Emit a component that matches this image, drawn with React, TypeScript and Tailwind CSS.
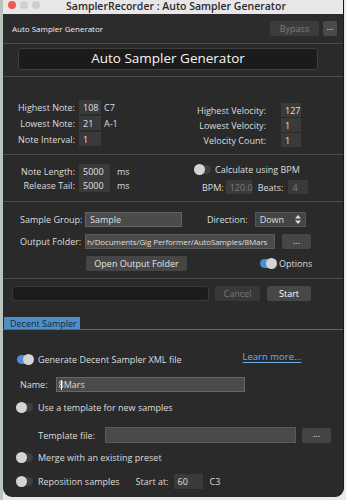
import React from "react";

function Toggle({ on = false }: { on?: boolean }) {
	return (
		<span
			className={`relative inline-block w-[16px] h-[9px] rounded-full shrink-0 ${on ? "bg-[#4a8fd2]" : "bg-[#3e3e3e]"}`}
		>
			<span
				className={`absolute top-[-1px] w-[11px] h-[11px] rounded-full bg-[#d4d4d4] ${on ? "right-[-1px]" : "left-[-1px]"}`}
			/>
		</span>
	);
}

function Box({
	children,
	className = "",
	dim = false,
}: {
	children?: React.ReactNode;
	className?: string;
	dim?: boolean;
}) {
	return (
		<span
			className={`inline-flex items-center h-[14px] px-[4px] bg-[#3a3a3a] ${dim ? "text-[#7a7a7a]" : "text-[#e0e0e0]"} ${className}`}
		>
			{children}
		</span>
	);
}

function Btn({ children, className = "" }: { children?: React.ReactNode; className?: string }) {
	return (
		<span className={`inline-flex items-center justify-center h-[15px] rounded-[2px] ${className}`}>
			{children}
		</span>
	);
}

const Sep = () => <div className="h-px bg-[#4a4a4a]" />;

export default function App() {
	return (
		<div className="w-[346px] h-[500px] bg-[#e9e9e9] flex font-['Open_Sans',sans-serif] font-medium text-[9px] text-[#dedede] leading-none overflow-hidden">
			<div className="w-[3px] bg-[#b9c4bd]" />
			<div className="w-[341px] h-[497px] flex flex-col bg-[#2a2a2a] rounded-b-[9px] overflow-hidden border-r border-[#1a1a1a]">
				{/* window title bar */}
				<div className="relative h-[14px] bg-[#e8e6e8] flex items-center justify-center">
					<div className="absolute left-[5px] top-[1px] flex gap-[4px]">
						<span className="w-[8px] h-[8px] rounded-full bg-[#ee5a52]" />
						<span className="w-[8px] h-[8px] rounded-full bg-[#cfcfcf]" />
						<span className="w-[8px] h-[8px] rounded-full bg-[#cfcfcf]" />
					</div>
					<span className="text-[10.5px] font-semibold text-[#2a2a2a] ml-[6px] -mt-[2px]">
						SamplerRecorder : Auto Sampler Generator
					</span>
				</div>

				{/* plugin header */}
				<div className="h-[29px] flex items-center justify-between pl-[9px] pr-[6px] bg-[#2c2c2c]">
					<span className="text-[8px] text-[#f0f0f0]">Auto Sampler Generator</span>
					<div className="flex gap-[4px]">
						<span className="w-[49px] h-[15px] rounded-[2px] bg-[#3c3c3c] text-[#7d7d7d] flex items-center justify-center">Bypass</span>
						<span className="w-[14px] h-[15px] rounded-[2px] bg-[#4a4a4a] text-white flex items-center justify-center text-[8px] pb-[3px]">...</span>
					</div>
				</div>
				<Sep />

				{/* big title */}
				<div className="h-[32px] pt-[4px] pl-[15px]">
					<div className="w-[300px] h-[22px] rounded-[3px] bg-[#1b1b1b] border border-[#3e3e3e] flex items-center justify-center text-[13.5px] font-normal text-[#f4f4f4]">
						Auto Sampler Generator
					</div>
				</div>
				<Sep />

				{/* notes + velocities */}
				<div className="h-[77px] flex pt-[23px]">
					<div className="w-[190px] flex flex-col gap-[2px]">
						{[
							["Highest Note:", "108", "C7"],
							["Lowest Note:", "21", "A-1"],
							["Note Interval:", "1", ""],
						].map(([l, v, n]) => (
							<div key={l} className="flex items-center h-[14px]">
								<span className="w-[75px] text-right pr-[3px]">{l}</span>
								<Box className="w-[22px] ml-[1px]">{v}</Box>
								<span className="ml-[3px]">{n}</span>
							</div>
						))}
					</div>
					<div className="flex flex-col gap-[1px] pt-[3px]">
						{[
							["Highest Velocity:", "127"],
							["Lowest Velocity:", "1"],
							["Velocity Count:", "1"],
						].map(([l, v]) => (
							<div key={l} className="flex items-center h-[14px]">
								<span className="w-[73px] text-right">{l}</span>
								<Box className="w-[20px] ml-[15px]">{v}</Box>
							</div>
						))}
					</div>
				</div>
				<Sep />

				{/* timing */}
				<div className="h-[46px] flex pt-[8px]">
					<div className="w-[190px] flex flex-col pt-[1px]">
						{[
							["Note Length:", "5000"],
							["Release Tail:", "5000"],
						].map(([l, v]) => (
							<div key={l} className="flex items-center h-[14px]">
								<span className="w-[75px] text-right pr-[3px]">{l}</span>
								<Box className="w-[31px] ml-[1px]">{v}</Box>
								<span className="ml-[7px]">ms</span>
							</div>
						))}
					</div>
					<div className="flex flex-col">
						<div className="flex items-center gap-[4px] h-[12px] ml-[2px]">
							<Toggle />
							<span>Calculate using BPM</span>
						</div>
						<div className="flex items-center h-[14px] mt-[5px] ml-[9px]">
							<span>BPM:</span>
							<Box dim className="w-[26px] ml-[2px]">120.0</Box>
							<span className="ml-[6px]">Beats:</span>
							<Box dim className="w-[20px] ml-[5px]">4</Box>
						</div>
					</div>
				</div>
				<Sep />

				{/* group + folder */}
				<div className="h-[76px] flex flex-col pt-[10px] gap-[7px] pl-[17px]">
					<div className="flex items-center h-[15px]">
						<span className="w-[65px]">Sample Group:</span>
						<span className="inline-flex items-center w-[97px] h-[15px] px-[4px] bg-[#4b4b4b] border border-[#646464]">Sample</span>
						<span className="ml-[25px]">Direction:</span>
						<span className="ml-[7px] inline-flex items-center justify-between w-[51px] h-[15px] px-[4px] bg-[#444] border border-[#555]">
							Down
							<svg width="6" height="9" viewBox="0 0 6 9" className="fill-[#ddd]">
								<path d="M3 0 L6 3.5 H0 Z M3 9 L6 5.5 H0 Z" />
							</svg>
						</span>
					</div>
					<div className="flex items-center h-[15px]">
						<span className="w-[65px]">Output Folder:</span>
						<span className="inline-flex items-center w-[190px] h-[15px] px-[1px] bg-[#4b4b4b] border border-[#5a5a5a] overflow-hidden whitespace-nowrap text-[8px] tracking-[-0.1px]">
							h/Documents/Gig Performer/AutoSamples/8Mars
						</span>
						<Btn className="ml-[7px] w-[29px] pb-[3px] bg-[#464646] text-[#e4e4e4]">...</Btn>
					</div>
					<div className="flex items-center h-[15px]">
						<Btn className="ml-[66px] w-[101px] bg-[#464646] text-[#e4e4e4]">Open Output Folder</Btn>
						<span className="ml-[73px] flex items-center gap-[3px]">
							<Toggle on />
							<span>Options</span>
						</span>
					</div>
				</div>
				<Sep />

				{/* progress */}
				<div className="h-[38px] flex items-start pt-[7px] pl-[9px]">
					<span className="w-[197px] h-[15px] rounded-[3px] bg-[#1c1c1c] border border-[#3a3a3a]" />
					<Btn className="ml-[6px] w-[45px] bg-[#383838] text-[#777]">Cancel</Btn>
					<Btn className="ml-[7px] w-[44px] bg-[#474747] text-white">Start</Btn>
				</div>

				{/* tabs */}
				<div className="flex items-end border-b border-[#4d6a80] pl-[1px]">
					<span className="w-[76px] h-[12px] bg-[#4e8fc9] text-[#182838] flex items-center pl-[6px]">Decent Sampler</span>
				</div>

				{/* decent sampler */}
				<div className="flex flex-col pt-[23px]">
					<div className="flex items-center h-[12px] pl-[14px]">
						<Toggle on />
						<span className="ml-[5px]">Generate Decent Sampler XML file</span>
						<span className="ml-[61px] -mt-[4px] text-[9.5px] text-[#6aaee8] underline underline-offset-2">Learn more...</span>
					</div>
					<div className="flex items-center h-[15px] mt-[12px] pl-[17px]">
						<span>Name:</span>
						<span className="ml-[8px] inline-flex items-center w-[189px] h-[15px] px-[2px] bg-[#4b4b4b] border border-[#666]">
							8<span className="w-px h-[10px] bg-white -ml-[3px] mr-[2px]" />Mars
						</span>
					</div>
					<div className="flex items-center h-[12px] mt-[9px] pl-[14px]">
						<Toggle />
						<span className="ml-[5px]">Use a template for new samples</span>
					</div>
					<div className="flex items-center h-[16px] mt-[14px]">
						<span className="w-[102px] text-right pr-[10px]">Template file:</span>
						<span className="w-[191px] h-[16px] bg-[#4a4a4a] border border-[#5a5a5a]" />
						<Btn className="ml-[6px] w-[29px] h-[14px] pb-[3px] bg-[#444] text-[#e4e4e4]">...</Btn>
					</div>
					<div className="flex items-center h-[12px] mt-[8px] pl-[14px]">
						<Toggle />
						<span className="ml-[5px]">Merge with an existing preset</span>
					</div>
					<div className="flex items-center h-[14px] mt-[11px] pl-[14px]">
						<Toggle />
						<span className="ml-[5px]">Reposition samples</span>
						<span className="ml-[16px]">Start at:</span>
						<Box className="ml-[5px] w-[29px] h-[15px]">60</Box>
						<span className="ml-[7px]">C3</span>
					</div>
				</div>
			</div>
		</div>
	);
}
